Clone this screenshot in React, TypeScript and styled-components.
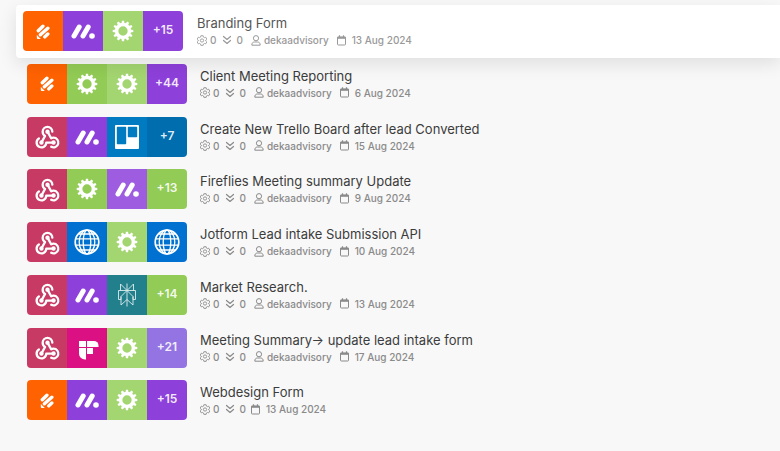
import React from "react";
import styled, { createGlobalStyle, css } from "styled-components";

const GlobalStyle = createGlobalStyle`
  *, *::before, *::after { box-sizing: border-box; }
  body {
    margin: 0;
    background: #f8f8f8;
    color: #3c3c3c;
    font-family: Inter, "Liberation Sans", sans-serif;
    overflow-x: hidden;
  }
`;

const Page = styled.main`
  padding: 5px 0 24px;
`;

const ScenarioList = styled.ul`
  display: grid;
  grid-auto-rows: 1fr;
  min-height: 422px;
  margin: 0;
  padding: 0;
  list-style: none;
`;

const ScenarioRow = styled.li<{ $active: boolean }>`
  display: flex;
  align-items: flex-start;
  gap: 13px;
  padding: 6px 0 6px 27px;

  ${({ $active }) =>
    $active &&
    css`
      position: relative;
      gap: 14px;
      margin-left: 16px;
      padding-left: 7px;
      border-radius: 4px 0 0 4px;
      background: #ffffff;
      box-shadow: 0 6px 18px rgba(0, 0, 0, 0.1);
    `}
`;

const Apps = styled.div`
  display: flex;
  flex: none;
  overflow: hidden;
  border-radius: 4px;
`;

const Tile = styled.span<{ $color: string }>`
  display: flex;
  align-items: center;
  justify-content: center;
  width: 40px;
  height: 40px;
  background: ${({ $color }) => $color};
  color: #ffffff;

  svg { display: block; }
`;

const Count = styled.span`
  padding-bottom: 2px;
  color: rgba(255, 255, 255, 0.9);
  font-size: 12px;
  font-weight: 600;
  line-height: 18px;
`;

const Details = styled.div`
  min-width: 0;
  padding-top: 3px;
`;

const Title = styled.a<{ $muted: boolean }>`
  display: block;
  color: ${({ $muted }) => ($muted ? "#555555" : "#3c3c3c")};
  font-size: 13px;
  line-height: 18px;
  text-decoration: none;
  white-space: nowrap;
`;

const Meta = styled.div<{ $muted: boolean }>`
  display: flex;
  align-items: center;
  gap: 5px;
  color: ${({ $muted }) => ($muted ? "#999999" : "#8a8a8a")};
  font-size: 10px;
  font-weight: 500;
  line-height: 16px;
  white-space: nowrap;
`;

const MetaItem = styled.span<{ $gap?: number }>`
  display: flex;
  align-items: center;
  gap: ${({ $gap = 3 }) => $gap}px;

  svg { display: block; flex: none; }
`;

const Owner = styled(MetaItem)`
  margin: 0 3px;
`;

const JotformIcon = () => (
  <svg width="14" height="17" viewBox="0 -1 14 17" fill="none" stroke="currentColor" strokeWidth="3.4" strokeLinecap="round" aria-hidden="true">
    <path d="M2.3 6.8 6.9 2.2" />
    <path d="M4.4 10.8 11.8 4.2" />
    <path d="M8.8 12.9 11.8 10" />
    <path d="M.8 11v3.1q0 .9.9.9h3.1z" fill="currentColor" stroke="none" />
  </svg>
);

const MondayIcon = () => (
  <svg width="24" height="16" viewBox="0 -1 24 16" aria-hidden="true">
    <g fill="none" stroke="currentColor" strokeWidth="5" strokeLinecap="round">
      <path d="M3 12 8.2 3" />
      <path d="M12 12 17.2 3" />
    </g>
    <circle cx="21" cy="12" r="2.8" fill="currentColor" />
  </svg>
);

const TEETH = Array.from({ length: 12 }, (_, index) => index * 30);

const GearIcon = () => (
  <svg width="22" height="22" viewBox="-11 -11 22 22" aria-hidden="true">
    <circle r="6.4" fill="none" stroke="currentColor" strokeWidth="3.5" />
    {TEETH.map((angle) => (
      <path key={angle} d="M-1.5-7.5-1.1-10.3h2.2L1.5-7.5z" fill="currentColor" transform={`rotate(${angle})`} />
    ))}
  </svg>
);

const WebhookIcon = () => (
  <svg width="29" height="29" viewBox="0 0 24 24" fill="none" stroke="currentColor" strokeWidth="1.9" strokeLinecap="round" strokeLinejoin="round" aria-hidden="true">
    <path d="M4.876 13.61a4 4 0 1 0 6.124 3.39h6" />
    <path d="M15.066 20.502a4 4 0 1 0 1.934-7.502c-.706 0-1.424.179-2 .5l-3-5.5" />
    <path d="M16 8a4 4 0 1 0-8 0c0 1.506.77 2.818 2 3.5l-3 5.5" />
    <g fill="currentColor" stroke="none">
      <circle cx="12" cy="8" r="1.8" />
      <circle cx="7" cy="17" r="1.8" />
      <circle cx="17" cy="17" r="1.8" />
    </g>
  </svg>
);

const TrelloIcon = () => (
  <svg width="24" height="24" viewBox="0 0 24 24" aria-hidden="true">
    <path fill="currentColor" fillRule="evenodd" d="M1 0h22q1 0 1 1v22q0 1-1 1H1q-1 0-1-1V1q0-1 1-1zM2.5 1.8q-.7 0-.7.7v16q0 .7.7.7h8q.7 0 .7-.7v-16q0-.7-.7-.7zM13.5 1.8q-.7 0-.7.7v9q0 .7.7.7h8q.7 0 .7-.7v-9q0-.7-.7-.7z" />
  </svg>
);

const GlobeIcon = () => (
  <svg width="26" height="26" viewBox="0 0 26 26" fill="none" stroke="currentColor" strokeWidth="1.3" aria-hidden="true">
    <circle cx="13" cy="13" r="11.8" strokeWidth="1.7" />
    <ellipse cx="13" cy="13" rx="7.8" ry="11.8" />
    <ellipse cx="13" cy="13" rx="3.8" ry="11.8" />
    <path d="M1 9.8h24M1 16.2h24M4.5 5h17M4.5 21h17" />
  </svg>
);

const PerplexityIcon = () => (
  <svg width="20" height="24" viewBox="0 0 20 24" fill="none" stroke="currentColor" strokeWidth="0.9" opacity="0.85" aria-hidden="true">
    <path d="M10 .5v23M3.5 7.5V1L10 7.5 16.5 1v6.5M1.5 7.5h17v9H16V13.5l-6-6-6 6v3H1.5zM4 13.5v8.5l6-5.5 6 5.5v-8.5" />
  </svg>
);

const FirefliesIcon = () => (
  <svg width="24" height="24" viewBox="0 0 24 24" fill="currentColor" aria-hidden="true">
    <path d="M4 5h7v6H4z" />
    <path d="M12 5h7a4.5 4.5 0 0 1 4.5 4.5V11H12z" />
    <path d="M4 12h7v11.5h-1A6 6 0 0 1 4 17.5z" />
    <path d="M12 12h6v6h-6z" />
  </svg>
);

const CogIcon = () => (
  <svg width="10" height="11" viewBox="1 0 22 24" fill="none" stroke="currentColor" strokeWidth="1.9" strokeLinejoin="round" aria-hidden="true">
    <path d="M9.5 1.5h5l.6 3 2.1 1.2 2.9-1 2.5 4.3-2.3 2v2.2l2.3 2-2.5 4.3-2.9-1-2.1 1.2-.6 3h-5l-.6-3-2.1-1.2-2.9 1-2.5-4.3 2.3-2V11l-2.3-2 2.5-4.3 2.9 1 2.1-1.2z" />
    <circle cx="12" cy="12" r="3.6" />
  </svg>
);

const TransferIcon = () => (
  <svg width="12" height="10" viewBox="0 0 12 10" fill="none" stroke="currentColor" strokeWidth="1.2" strokeLinecap="round" strokeLinejoin="round" aria-hidden="true">
    <path d="m2.5 1.5 3.5 3 3.5-3M2.5 5.5 6 8.5l3.5-3" />
  </svg>
);

const UserIcon = () => (
  <svg width="10" height="11" viewBox="0 0 10 11" fill="none" stroke="currentColor" strokeWidth="1" strokeLinejoin="round" aria-hidden="true">
    <circle cx="5" cy="3.2" r="2.6" />
    <path d="M.8 10.2c0-2.2 1-3.2 2.8-3.2h2.8c1.8 0 2.8 1 2.8 3.2z" />
  </svg>
);

const CalendarIcon = () => (
  <svg width="9" height="11" viewBox="0 0 9 11" fill="none" stroke="currentColor" strokeWidth="1" aria-hidden="true">
    <rect x="0.5" y="2" width="8" height="8" rx="0.8" />
    <path d="M.2 2.8h8.6" strokeWidth="2" />
    <path d="M2.5.3v2M6.5.3v2" strokeWidth="1.2" />
  </svg>
);

const APPS = {
  jotform: { label: "Jotform", Icon: JotformIcon },
  monday: { label: "monday.com", Icon: MondayIcon },
  gear: { label: "Tools", Icon: GearIcon },
  webhook: { label: "Webhooks", Icon: WebhookIcon },
  trello: { label: "Trello", Icon: TrelloIcon },
  globe: { label: "HTTP", Icon: GlobeIcon },
  perplexity: { label: "Perplexity", Icon: PerplexityIcon },
  fireflies: { label: "Fireflies", Icon: FirefliesIcon },
};

type AppTile = { app: keyof typeof APPS; color: string };

type Scenario = {
  title: string;
  date: string;
  owner?: string;
  tiles: AppTile[];
  more?: { count: number; color: string };
  active?: boolean;
};

const ORANGE = "#ff6200";
const PURPLE = "#8e40da";
const LIME = "#a3d570";
const GREEN = "#92cb55";
const CRIMSON = "#c73a63";
const BLUE = "#0070d1";

const OWNER = "dekaadvisory";

const jotform: AppTile = { app: "jotform", color: ORANGE };
const monday: AppTile = { app: "monday", color: PURPLE };
const tools: AppTile = { app: "gear", color: LIME };
const flow: AppTile = { app: "gear", color: GREEN };
const webhook: AppTile = { app: "webhook", color: CRIMSON };
const http: AppTile = { app: "globe", color: BLUE };

const SCENARIOS: Scenario[] = [
  { title: "Branding Form", date: "13 Aug 2024", owner: OWNER, tiles: [jotform, monday, tools], more: { count: 15, color: PURPLE }, active: true },
  { title: "Client Meeting Reporting", date: "6 Aug 2024", owner: OWNER, tiles: [jotform, flow, tools], more: { count: 44, color: PURPLE } },
  { title: "Create New Trello Board after lead Converted", date: "15 Aug 2024", owner: OWNER, tiles: [webhook, monday, { app: "trello", color: "#007bc1" }], more: { count: 7, color: "#006dae" } },
  { title: "Fireflies Meeting summary Update", date: "9 Aug 2024", owner: OWNER, tiles: [webhook, flow, { app: "monday", color: "#9e5de0" }], more: { count: 13, color: GREEN } },
  { title: "Jotform Lead intake Submission API", date: "10 Aug 2024", owner: OWNER, tiles: [webhook, http, tools, http] },
  { title: "Market Research.", date: "13 Aug 2024", owner: OWNER, tiles: [webhook, monday, { app: "perplexity", color: "#22808d" }], more: { count: 14, color: GREEN } },
  { title: "Meeting Summary→ update lead intake form", date: "17 Aug 2024", owner: OWNER, tiles: [webhook, { app: "fireflies", color: "#db1082" }, tools], more: { count: 21, color: "#9474e3" } },
  { title: "Webdesign Form", date: "13 Aug 2024", tiles: [jotform, monday, tools], more: { count: 15, color: PURPLE } },
];

function ScenarioItem({ scenario }: { scenario: Scenario }) {
  const { title, date, owner, tiles, more, active = false } = scenario;
  return (
    <ScenarioRow $active={active}>
      <Apps>
        {tiles.map(({ app, color }, index) => {
          const { label, Icon } = APPS[app];
          return (
            <Tile key={index} $color={color} role="img" aria-label={label}>
              <Icon />
            </Tile>
          );
        })}
        {more && (
          <Tile $color={more.color}>
            <Count>+{more.count}</Count>
          </Tile>
        )}
      </Apps>
      <Details>
        <Title href="#" $muted={active}>{title}</Title>
        <Meta $muted={active}>
          <MetaItem><CogIcon />0</MetaItem>
          <MetaItem><TransferIcon />0</MetaItem>
          {owner && <Owner><UserIcon />{owner}</Owner>}
          <MetaItem $gap={6}><CalendarIcon />{date}</MetaItem>
        </Meta>
      </Details>
    </ScenarioRow>
  );
}

export default function App() {
  return (
    <>
      <GlobalStyle />
      <Page>
        <ScenarioList>
          {SCENARIOS.map((scenario) => (
            <ScenarioItem key={scenario.title} scenario={scenario} />
          ))}
        </ScenarioList>
      </Page>
    </>
  );
}
